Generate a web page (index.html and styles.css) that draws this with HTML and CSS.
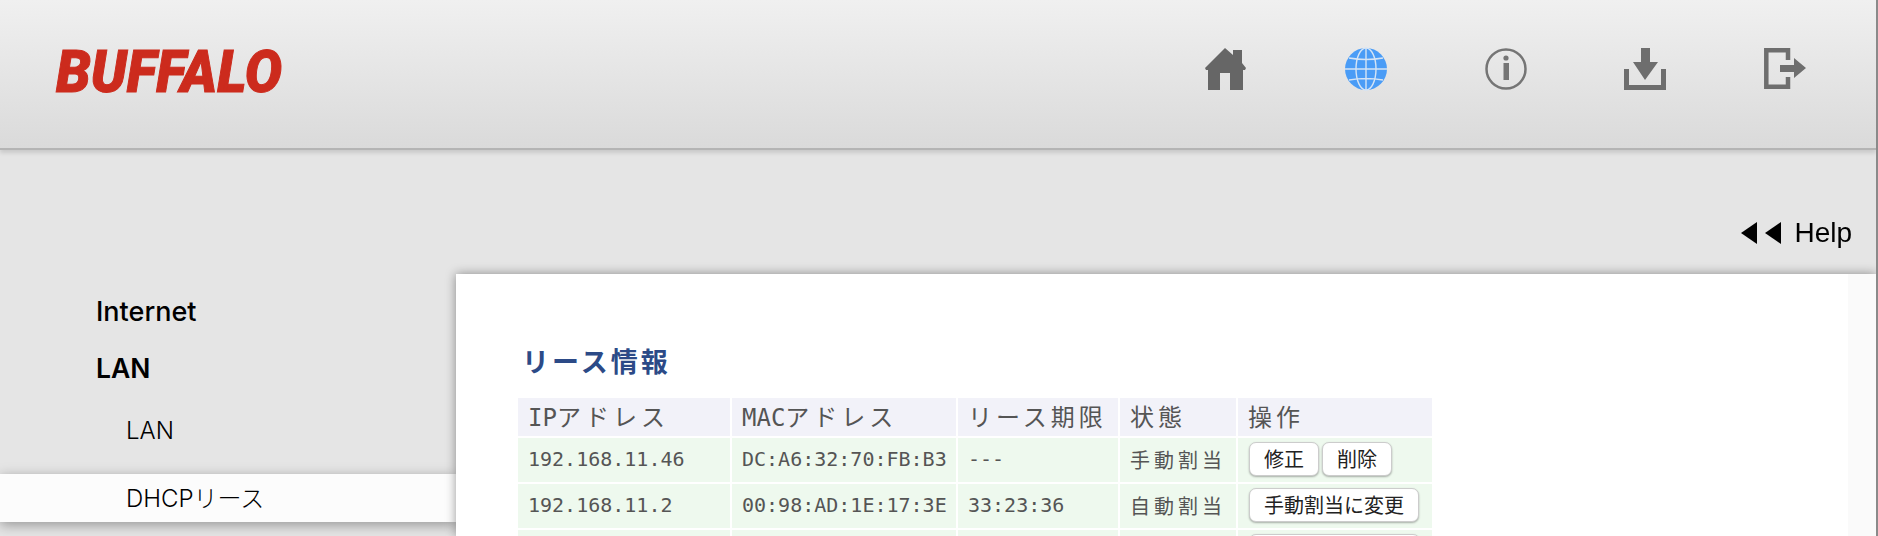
FILE: index.html
```html
<!DOCTYPE html>
<html lang="ja">
<head>
  <meta charset="UTF-8" />
  <title>BUFFALO</title>
  <link rel="stylesheet" href="styles.css">
</head>
<body>
  <header class="top">
    <svg class="logo" viewBox="0 0 226 42"><text class="logo-text" x="0" y="42" textLength="226" lengthAdjust="spacingAndGlyphs">BUFFALO</text></svg>
    <nav class="icons">
      <svg class="ico" viewBox="0 0 42 42"><path fill="#666" d="M20 0L28 7V2H37V15L41 20 40 22H38V42H25V25H15V42H3V22H1L0 20Z"/></svg>
      <svg class="ico" viewBox="0 0 42 42"><circle cx="21" cy="21" r="21" fill="#4a9cf6"/><g fill="none" stroke="#d5e4f5" stroke-width="1.400"><ellipse cx="21" cy="21" rx="10" ry="21"/><path d="M21 0V42M0 21H42M4 10Q21 13 38 10M4 32Q21 29 38 32"/></g></svg>
      <svg class="ico" viewBox="0 0 42 42"><circle cx="21" cy="21" r="19.500" fill="none" stroke="#757575" stroke-width="2.500"/><path fill="#757575" d="M18.500 15H24V32H18.500Z"/><circle cx="21" cy="10" r="2.600" fill="#757575"/></svg>
      <svg class="ico" viewBox="0 0 42 42"><path fill="#6e6e6e" d="M17 0H26V14H34L21 32 9 14H17Z"/><path fill="none" stroke="#6e6e6e" stroke-width="5" d="M2.500 21V39.500H39.500V21"/></svg>
      <svg class="ico" viewBox="0 0 42 42"><path fill="none" stroke="#6e6e6e" stroke-width="4.500" d="M24 12V2.300H2.300V38.700H24V29"/><path fill="#6e6e6e" d="M16 17H30V10L42 20 30 30V24H16Z"/></svg>
    </nav>
  </header>

  <div class="help-row"><span class="help"><i class="tri"></i><i class="tri"></i>Help</span></div>

  <div class="main">
    <aside class="side">
      <div class="side-head">Internet</div>
      <div class="side-head lan">LAN</div>
      <div class="side-item">LAN</div>
      <div class="side-item current">DHCPリース</div>
    </aside>
    <section class="panel">
      <h2>リース情報</h2>
      <table class="lease">
        <tr><th class="c1">IP<span class="wide">アドレス</span></th><th class="c2">MAC<span class="wide">アドレス</span></th><th class="c3"><span class="wide">リース期限</span></th><th class="c4"><span class="wide">状態</span></th><th class="c5"><span class="wide">操作</span></th></tr>
        <tr><td>192.168.11.46</td><td>DC:A6:32:70:FB:B3</td><td>---</td><td><span class="wide">手動割当</span></td><td><button>修正</button><button>削除</button></td></tr>
        <tr><td>192.168.11.2</td><td>00:98:AD:1E:17:3E</td><td>33:23:36</td><td><span class="wide">自動割当</span></td><td><button>手動割当に変更</button></td></tr>
        <tr><td></td><td></td><td></td><td></td><td><button class="blank"></button></td></tr>
      </table>
    </section>
  </div>
</body>
</html>
```

FILE: styles.css
```css
* {
  box-sizing: border-box;
}
html, body {
  height: 536px;
  overflow: hidden;
}
body {
  margin: 0;
  background: #e5e5e5;
  border-right: 2px solid #8a8a8a;
  font-family: Inter, "Noto Sans CJK JP", sans-serif;
  color: #000;
}
.top {
  height: 150px;
  display: flex;
  justify-content: space-between;
  align-items: flex-start;
  background: linear-gradient(#f0f0f0, #dadada);
  border-bottom: 2px solid #b4b4b4;
  box-shadow: 0 3px 4px rgba(0,0,0,0.12);
  padding: 48px 0 0 56px;
}
.logo {
  width: 226px;
  height: 42px;
  margin-top: 2px;
  overflow: visible;
  filter: blur(0.5px);
}
.logo-text {
  font-family: Roboto, "Liberation Sans", sans-serif;
  font-size: 59px;
  font-weight: 900;
  font-style: italic;
  fill: #cc2b1d;
  stroke: #cc2b1d;
  stroke-width: 1px;
}
.icons {
  display: flex;
  gap: 97.750px;
  padding: 0 70px 0 0;
}
.ico {
  width: 42px;
  height: 42px;
  overflow: visible;
  filter: blur(0.5px);
}
.help-row {
  height: 124px;
  display: flex;
  justify-content: flex-end;
  padding: 68px 24px 0 0;
}
.help {
  display: flex;
  align-items: center;
  height: 30px;
  font-family: "Liberation Sans", sans-serif;
  font-size: 28px;
  filter: blur(0.5px);
}
.tri {
  border-style: solid;
  border-width: 11px 16px 11px 0;
  border-color: transparent #000 transparent transparent;
  margin-right: 8px;
}
.tri + .tri {
  margin-right: 13px;
}
.main {
  display: flex;
  height: 262px;
}
.side {
  width: 456px;
  flex: none;
  padding-top: 23px;
}
.side-head {
  padding-left: 96px;
  font-size: 27px;
  line-height: 30px;
  font-weight: 500;
  margin-bottom: 26px;
}
.side-head.lan {
  font-size: 26.500px;
  font-weight: 600;
  margin-bottom: 33px;
}
.side-item {
  padding-left: 126px;
  font-size: 24px;
  line-height: 30px;
  font-weight: 300;
}
.side-item.current {
  margin-top: 28px;
  height: 48px;
  line-height: 50px;
  background: #fcfcfc;
  box-shadow: 0 3px 12px rgba(0,0,0,0.35);
}
.panel {
  flex: 1;
  background: #fff;
  box-shadow: 0 0 10px rgba(0,0,0,0.4);
  position: relative;
  overflow: hidden;
  padding: 68px 0 0 60px;
  font-family: "Noto Sans CJK JP", sans-serif;
}
/* slightly off white strip down the right side */
.panel::after {
  content: "";
  position: absolute;
  top: 0;
  right: 0;
  bottom: 0;
  width: 28px;
  background: #fafafa;
}
h2 {
  margin: 0 0 16px 6px;
  font-size: 27px;
  line-height: 38px;
  font-weight: 700;
  color: #2c4a87;
  letter-spacing: 3px;
}
.lease {
  border-collapse: separate;
  border-spacing: 2px;
  width: 918px;
  table-layout: fixed;
  font-family: "DejaVu Sans Mono", "Noto Sans CJK JP", monospace;
  color: #555;
}
.wide {
  font-family: "Noto Sans CJK JP", sans-serif;
  letter-spacing: 4px;
}
th {
  height: 38px;
  background: #f2f2f9;
  font-size: 24px;
  font-weight: 400;
  text-align: left;
  padding: 0 0 3px 10px;
  white-space: nowrap;
}
td {
  height: 44px;
  background: #eef9ee;
  font-size: 20px;
  padding: 0 0 2px 10px;
  white-space: nowrap;
}
td:last-child {
  padding-left: 11px;
}
.c1 { width: 212px; }
.c2 { width: 224px; }
.c3 { width: 160px; }
.c4 { width: 116px; }
.c5 { width: 194px; }
button {
  font-family: "Noto Sans CJK JP", sans-serif;
  font-size: 20px;
  line-height: 28px;
  height: 34px;
  padding: 0 14px;
  margin-right: 3px;
  color: #222;
  background: #fff;
  border: 1px solid #ccc;
  border-radius: 7px;
  box-shadow: 0 1px 2px rgba(0,0,0,0.3);
  vertical-align: middle;
}
.blank {
  width: 171px;
}
```
